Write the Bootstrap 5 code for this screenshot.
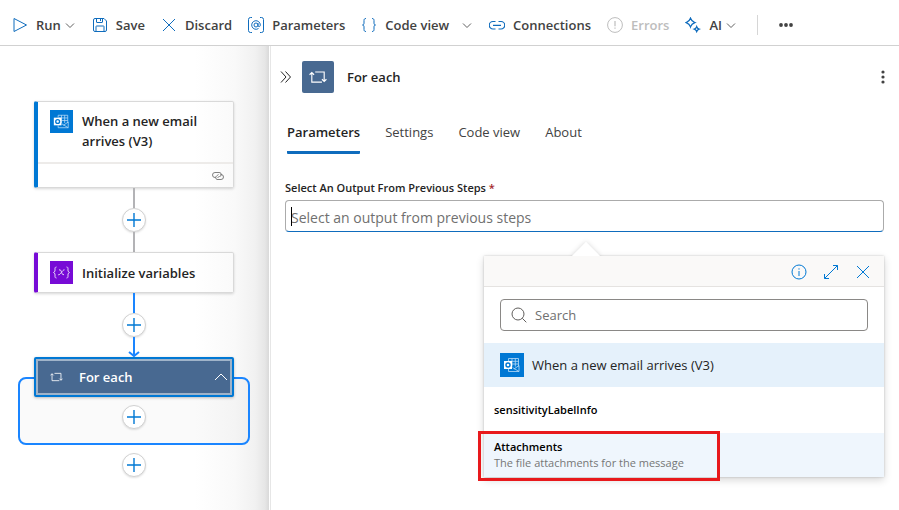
<!DOCTYPE html>
<html lang="en">
<head>
<meta charset="utf-8">
<meta name="viewport" content="width=device-width, initial-scale=1">
<title>Workflow designer</title>
<link rel="stylesheet" href="https://cdn.jsdelivr.net/npm/bootstrap@5.3.0/dist/css/bootstrap.min.css">
<style>
  :root { --az: #0f6cbd; --node: #486991; --edge: #1a85ff; }
  body { font-family: "Open Sans", "Noto Sans", sans-serif; font-size: 13px; line-height: 20px; color: #242424; background: #fff; }
  svg { display: block; flex: none; fill: none; stroke: currentColor; }
  button { color: inherit; background: none; border: 0; padding: 0; }
  .semi { font-weight: 600; }
  .medium { font-weight: 500; }
  .toolbar { height: 46px; padding: 5px 4px 0; border-bottom: 1px solid #d1d1d1; }
  .tool { display: flex; align-items: center; padding: 6px 8px; font-weight: 600; color: #424242; white-space: nowrap; font-size: 13px; }
  .tool > svg:first-child { color: var(--az); margin-right: 8px; }
  .tool .chev { margin-left: 3px; color: #616161; }
  .tool .chev-split { margin-left: 12px; }
  .tool:disabled, .tool:disabled > svg:first-child { color: #bdbdbd; }
  .tool.more > svg:first-child { color: #424242; }
  .tool-rule { width: 1px; height: 20px; background: #d6d6d6; margin: 0 12px 0 12px; }
  .work { min-height: calc(100vh - 46px); }
  .flow-pane { width: 271px; flex: none; padding: 55px 20px 0 18px; border-right: 1px solid #e6e6e6;
    background: linear-gradient(90deg, #fff 195px, #f9f9f9 235px, #f1f1f1 255px, #e6e6e6 265px, #d9d9d9 269px, #fff 269px); }
  .node-card { width: 200px; background: linear-gradient(90deg, #fff 80%, #fafafa); border: 1px solid #d9d9d9; border-left: 4px solid #0078d4; border-radius: 2px; box-shadow: 0 1px 3px rgba(0,0,0,.16); }
  .node-body { padding: 10px 12px; gap: 9px; font-size: 13px; }
  .node-top { height: 60px; padding-top: 9px; }
  .node-top svg { margin-top: -1px; }
  .node-foot { border-top: 2px solid #edebe9; height: 25px; padding: 0 9px; color: #616161; }
  .node-var { border-left-color: #770bd6; }
  .node-var .node-body { padding: 8px 12px; }
  .stem { width: 2px; height: 20px; background: #b3b3b6; }
  .stem-on { background: var(--edge); }
  .arrow-on { color: var(--edge); }
  .plus { width: 24px; height: 24px; border: 1px solid #d1d1d1; border-radius: 50%; background: #fff; color: #0078d4; box-shadow: 0 1px 2px rgba(0,0,0,.12); display: grid; place-items: center; flex: none; }
  .loop-head { width: 200px; height: 40px; background: var(--node); border: 2px solid #0078d4; border-radius: 2px; box-shadow: inset 0 0 0 2px #9fb3c9, 0 1px 3px rgba(0,0,0,.25); color: #fff; padding: 0 4px 0 14px; font-size: 13px; z-index: 1; }
  .loop-box { align-self: stretch; height: 68px; margin-top: -20px; margin-bottom: 8px; border: 2px solid var(--edge); border-radius: 8px; background: rgba(0,0,0,.02); padding-top: 26px; }
  .panel { min-width: 0; padding: 15px 15px 0 14px; }
  .panel-head { margin-left: -5px; margin-right: -1px; }
  .panel-icon { width: 32px; height: 32px; border-radius: 2px; background: var(--node); color: #fff; display: grid; place-items: center; margin: 0 13px 0 10px; }
  .tabs { gap: 25px; margin: 24px 2px 0; }
  .tab { color: #424242; padding: 5px 0 9px; border-bottom: 3px solid transparent; }
  .tab.active { color: #242424; font-weight: 600; border-color: var(--az); border-radius: 1px; }
  .field-label { font-size: 11px; line-height: 16px; margin: 26px 0 4px; }
  .req { color: #a4262c; }
  .big-input { height: 32px; padding: 2px 4px 0 5px; border: 1px solid #ababab; border-bottom-color: #0f6cbd; border-radius: 4px; font-size: 14px; outline: 0; width: 100%; }
  input::placeholder { color: #707070; opacity: 1; }
  .field-wrap { position: relative; }
  .caret { position: absolute; left: 6px; top: 7px; width: 1px; height: 19px; background: #000; }
  .picker { width: 400px; max-width: 100%; margin-top: 24px; position: relative; box-shadow: 0 3px 8px rgba(0,0,0,.16), 0 0 2px rgba(0,0,0,.2); background: #fff; }
  .beak { position: absolute; width: 20px; height: 20px; left: 92px; top: -10px; transform: rotate(45deg); background: #fff; box-shadow: 0 0 5px rgba(0,0,0,.16); }
  .picker-bar { position: relative; height: 31px; background: #faf9f8; border-bottom: 1px solid #e5e3e1; color: #0078d4; padding: 2px 13px 0; gap: 16px; }
  .search { margin: 12px 16px 12px; height: 32px; border: 1px solid #8a8886; border-radius: 4px; padding: 0 9px; gap: 7px; color: #605e5c; }
  .search input { border: 0; outline: 0; padding: 0; flex: 1; min-width: 0; font-size: 13px; }
  .group { background: #e5f1fb; height: 44px; padding: 0 16px; gap: 8px; }
  .token { display: block; width: 100%; text-align: left; padding: 0 10px; height: 46px; font-size: 11px; line-height: 16px; color: #000; }
  .token.on { background: #eff6fd; height: 44px; }
  .token .desc { color: #767676; }
  .callout { position: absolute; left: -6px; bottom: -4px; width: 242px; height: 50px; border: 3px solid #e8191c; pointer-events: none; }
</style>
</head>
<body>
<svg width="0" height="0" class="position-absolute" aria-hidden="true">
  <symbol id="chevron" viewBox="0 0 12 12"><path d="M2 4.500l4 4 4-4"/></symbol>
  <symbol id="plus" viewBox="0 0 16 16"><path d="M8 1v14M1 8h14" stroke-width="1.400"/></symbol>
  <symbol id="cross" viewBox="0 0 16 16"><path d="M2 2l12 12M14 2L2 14"/></symbol>
  <symbol id="loop" viewBox="0 0 16 12"><path d="M2.500 2v8.500h9M.5 4l2-2 2 2M5.500 1.500h8V10M11.500 8l2 2 2-2"/></symbol>
  <symbol id="outlook" viewBox="0 0 24 24">
    <rect width="24" height="24" fill="#0078d4" stroke="none"/>
    <path d="M8.500 8V5.500h10v8M8.500 16v2.500h10.500v-6l-5 3.500M12 5.500v8M15.300 5.500v8M9 8.300h9.500M12 11h6.500M12.500 14.500l6.500 4" stroke="#b9dcf7" stroke-width=".8"/>
    <rect x="4" y="8" width="8" height="8" fill="#fff" stroke="none"/><circle cx="8" cy="12" r="2" stroke="#0078d4" stroke-width="1.400"/>
  </symbol>
</svg>

<header class="toolbar d-flex align-items-center" role="toolbar" aria-label="Workflow">
  <button class="tool"><svg width="16" height="16"><path d="M2 1.500v13L14.500 8z" stroke-linejoin="round"/></svg>Run<svg class="chev" width="12" height="12"><use href="#chevron"/></svg></button>
  <button class="tool"><svg width="16" height="16"><path d="M3 1.500h9l2.500 2.500v9a1.500 1.500 0 0 1-1.500 1.500H3A1.500 1.500 0 0 1 1.500 13V3A1.500 1.500 0 0 1 3 1.500zM4.500 1.500V5a.5.5 0 0 0 .5.5h5a.5.5 0 0 0 .5-.5V1.500M4 14.500V9.500a.5.5 0 0 1 .5-.5h7a.5.5 0 0 1 .5.5v5M8.500 2v2"/></svg>Save</button>
  <button class="tool"><svg width="16" height="16"><use href="#cross"/></svg>Discard</button>
  <button class="tool"><svg width="16" height="16"><path d="M4 .5H2.500a2 2 0 0 0-2 2v11a2 2 0 0 0 2 2H4M12 .5h1.500a2 2 0 0 1 2 2v11a2 2 0 0 1-2 2H12M10.500 11.500A4.300 4.300 0 1 1 12.300 8c0 2.200-2.300 2.200-2.300.3V6"/><circle cx="8" cy="8" r="2"/></svg>Parameters</button>
  <button class="tool"><svg width="16" height="16"><path d="M5 1.500C3.500 1.500 3 2.200 3 3.500V6c0 1.300-.5 2-1.500 2C2.500 8 3 8.700 3 10v2.500c0 1.300.5 2 2 2M11 1.500c1.500 0 2 .7 2 2V6c0 1.300.5 2 1.500 2-1 0-1.500.7-1.500 2v2.500c0 1.300-.5 2-2 2"/></svg>Code view<svg class="chev chev-split" width="12" height="12"><use href="#chevron"/></svg></button>
  <button class="tool"><svg width="16" height="16"><path d="M6.500 12H4a3.500 3.500 0 0 1 0-7.500h2.500M9.500 4.500H12A3.500 3.500 0 0 1 12 12H9.500M4 8.300h8" stroke-width="1.200"/></svg>Connections</button>
  <button class="tool" disabled><svg width="16" height="16"><circle cx="8" cy="8" r="7.400"/><path d="M8 4v5.300M8 10.500v1.300" stroke-width="1.200"/></svg>Errors</button>
  <button class="tool"><svg width="16" height="16"><path d="M5.500 1.300c.9 2.600 1.700 3.400 4.300 4.300-2.600.9-3.400 1.700-4.300 4.300C4.600 7.300 3.800 6.500 1.200 5.600 3.800 4.700 4.600 3.900 5.500 1.300zM11.700 9.700c.5 1.400 1 1.900 2.400 2.400-1.400.5-1.900 1-2.400 2.400-.5-1.400-1-1.900-2.400-2.400 1.400-.5 1.900-1 2.400-2.400z" stroke-width="1.300"/></svg>AI<svg class="chev" width="12" height="12"><use href="#chevron"/></svg></button>
  <span class="tool-rule"></span>
  <button class="tool more" aria-label="More"><svg width="16" height="16"><g fill="currentColor" stroke="none"><circle cx="3" cy="8" r="1.900"/><circle cx="8" cy="8" r="1.900"/><circle cx="13" cy="8" r="1.900"/></g></svg></button>
</header>

<main class="work d-flex">
  <section class="flow-pane d-flex flex-column align-items-center" aria-label="Flow">
    <article class="node-card">
      <div class="node-body node-top d-flex align-items-start">
        <svg width="23" height="23"><use href="#outlook"/></svg><span class="semi flex-fill">When a new email arrives (V3)</span>
      </div>
      <div class="node-foot d-flex align-items-center justify-content-end">
        <svg width="12" height="10"><path d="M3.500 6.500H3A2.500 2.500 0 0 1 3 1.500h4A2 2 0 0 1 7.500 5.500L5.500 6.500M8.500 3.500H9a2.500 2.500 0 0 1 0 5H5A2 2 0 0 1 4.500 5L6.500 3.500" stroke-width=".8"/></svg>
      </div>
    </article>
    <span class="stem"></span>
    <button class="plus" aria-label="Add step"><svg width="16" height="16"><use href="#plus"/></svg></button>
    <span class="stem"></span>
    <article class="node-card node-var">
      <div class="node-body d-flex align-items-center">
        <svg width="23" height="23" viewBox="0 0 23 23"><rect width="23" height="23" fill="#770bd6" stroke="none"/><path d="M6.500 6C5 6 5 7 5 8s.3 3-1.500 3.500C5.300 12 5 14 5 15s0 2 1.500 2M16.500 6C18 6 18 7 18 8s-.3 3 1.500 3.500C17.700 12 18 14 18 15s0 2-1.500 2M9 9c3.200-1.500 2 6 5 4.500M14.500 8.800c-2-.3-4 5.500-6.300 5" stroke="#eadcf8"/></svg>
        <span class="semi">Initialize variables</span>
      </div>
    </article>
    <span class="stem stem-on"></span>
    <button class="plus" aria-label="Add step"><svg width="16" height="16"><use href="#plus"/></svg></button>
    <svg class="arrow-on" width="12" height="20" stroke-width="2"><path d="M6 0v19M1 15l5 4 5-4"/></svg>
    <button class="loop-head d-flex align-items-center semi" aria-expanded="true">
      <svg width="13" height="10"><use href="#loop"/></svg><span class="ms-3 me-auto">For each</span>
      <svg width="14" height="10"><path d="M1 8l6-6 6 6"/></svg>
    </button>
    <div class="loop-box d-flex justify-content-center">
      <button class="plus" aria-label="Add step in loop"><svg width="16" height="16"><use href="#plus"/></svg></button>
    </div>
    <button class="plus" aria-label="Add step"><svg width="16" height="16"><use href="#plus"/></svg></button>
  </section>

  <section class="panel flex-fill" aria-label="For each">
    <div class="panel-head d-flex align-items-center">
      <button aria-label="Collapse"><svg width="12" height="14"><path d="M1 1.500L6 7l-5 5.500M5.500 1.500l5 5.500-5 5.500"/></svg></button>
      <span class="panel-icon"><svg width="18" height="14"><use href="#loop"/></svg></span>
      <span class="semi me-auto">For each</span>
      <button aria-label="Options"><svg width="4" height="14"><g fill="#424242" stroke="none"><circle cx="2" cy="2" r="1.600"/><circle cx="2" cy="7" r="1.600"/><circle cx="2" cy="12" r="1.600"/></g></svg></button>
    </div>
    <div class="tabs d-flex" role="tablist">
      <button class="tab active" role="tab" aria-selected="true">Parameters</button>
      <button class="tab" role="tab">Settings</button>
      <button class="tab" role="tab">Code view</button>
      <button class="tab" role="tab">About</button>
    </div>
    <label class="field-label semi d-block" for="source">Select An Output From Previous Steps <span class="req">*</span></label>
    <div class="field-wrap">
      <input id="source" class="big-input d-block" type="text" placeholder="Select an output from previous steps"><span class="caret"></span>
    </div>
    <div class="picker ms-auto">
      <span class="beak"></span>
      <div class="picker-bar d-flex align-items-center justify-content-end">
        <button aria-label="Info"><svg width="16" height="16"><circle cx="8" cy="8" r="7"/><path d="M8 7v5M8 4.300v1.300"/></svg></button>
        <button aria-label="Expand"><svg width="16" height="16"><path d="M1.500 14.500l13-13M10 1.500h4.500V6M1.500 10v4.500H6"/></svg></button>
        <button aria-label="Close"><svg width="16" height="16"><use href="#cross"/></svg></button>
      </div>
      <div class="search d-flex align-items-center">
        <svg width="18" height="18"><circle cx="8" cy="8" r="6"/><path d="M12.300 12.300l4 4"/></svg>
        <input type="search" placeholder="Search" aria-label="Search">
      </div>
      <div class="group d-flex align-items-center">
        <svg width="24" height="24"><use href="#outlook"/></svg><span class="medium">When a new email arrives (V3)</span>
      </div>
      <button class="token semi">sensitivityLabelInfo</button>
      <button class="token on"><span class="semi d-block">Attachments</span><span class="desc d-block">The file attachments for the message</span></button>
      <span class="callout"></span>
    </div>
  </section>
</main>
<script src="https://cdn.jsdelivr.net/npm/bootstrap@5.3.0/dist/js/bootstrap.bundle.min.js"></script>
</body>
</html>
